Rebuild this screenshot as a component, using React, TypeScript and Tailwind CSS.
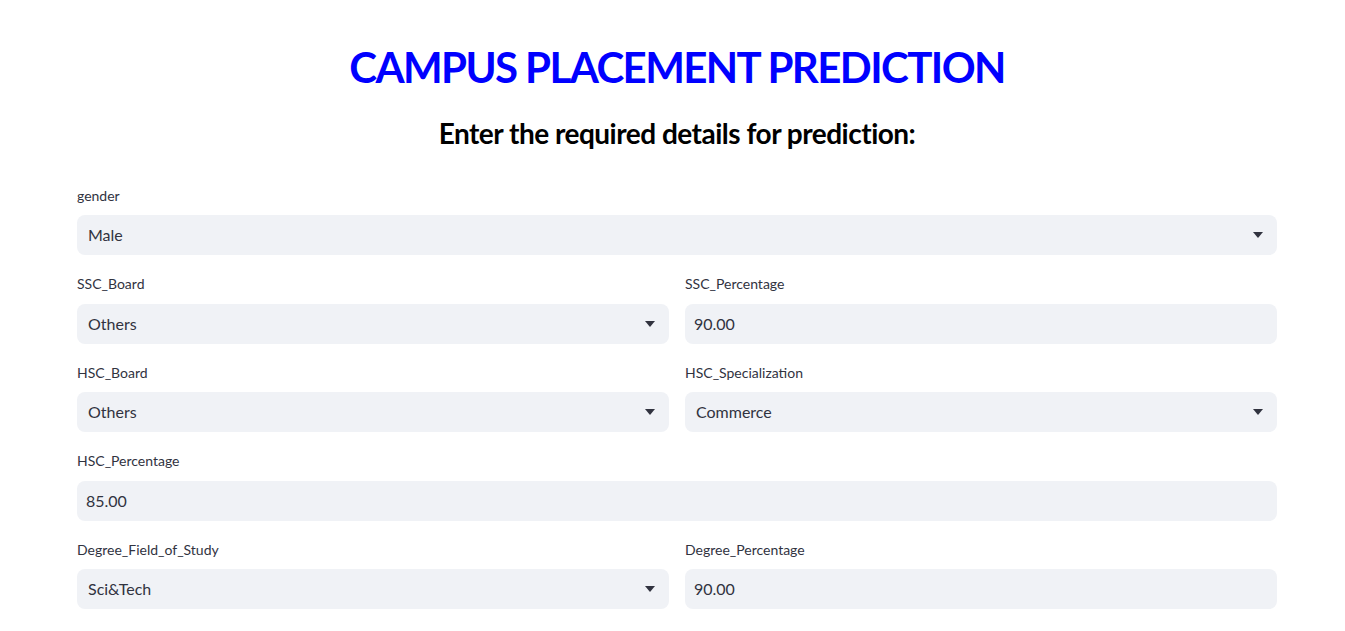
const Caret = () => (
  <svg width="10" height="6" viewBox="0 0 10 6" className="shrink-0">
    <path d="M0 0h10L5 6z" fill="#31333f" />
  </svg>
);

const Label = ({ text }: { text: string }) => (
  <div className="h-6 flex items-center text-[14px] text-[#31333f] mb-2">{text}</div>
);

const SelectBox = ({ label, value }: { label: string; value: string }) => (
  <div className="flex-1 min-w-0">
    <Label text={label} />
    <div className="h-10 rounded-lg bg-[#f0f2f6] flex items-center justify-between pl-[11px] pr-[14px] text-[16px] text-[#31333f]">
      <span>{value}</span>
      <Caret />
    </div>
  </div>
);

const NumberBox = ({ label, value }: { label: string; value: string }) => (
  <div className="flex-1 min-w-0">
    <Label text={label} />
    <div className="h-10 rounded-lg bg-[#f0f2f6] flex items-center pl-[9px] text-[16px] text-[#31333f]">
      <span>{value}</span>
    </div>
  </div>
);

export default function App() {
  return (
    <div className="min-h-screen bg-white font-['Lato','Noto_Sans',sans-serif]">
      <div className="pl-[77px] pr-[68px] pt-[40px]">
        <h1 className="text-center text-[42px] leading-[54px] tracking-[-1.6px] font-bold text-[#0000ff]">
          CAMPUS PLACEMENT PREDICTION
        </h1>
        <h3 className="mt-[21px] text-center text-[28px] leading-[36px] tracking-[-0.5px] font-bold text-black">
          Enter the required details for prediction:
        </h3>
        <div className="mt-[32px] flex flex-col gap-[16.5px]">
          <SelectBox label="gender" value="Male" />
          <div className="flex gap-4">
            <SelectBox label="SSC_Board" value="Others" />
            <NumberBox label="SSC_Percentage" value="90.00" />
          </div>
          <div className="flex gap-4">
            <SelectBox label="HSC_Board" value="Others" />
            <SelectBox label="HSC_Specialization" value="Commerce" />
          </div>
          <NumberBox label="HSC_Percentage" value="85.00" />
          <div className="flex gap-4">
            <SelectBox label="Degree_Field_of_Study" value="Sci&Tech" />
            <NumberBox label="Degree_Percentage" value="90.00" />
          </div>
        </div>
      </div>
    </div>
  );
}
